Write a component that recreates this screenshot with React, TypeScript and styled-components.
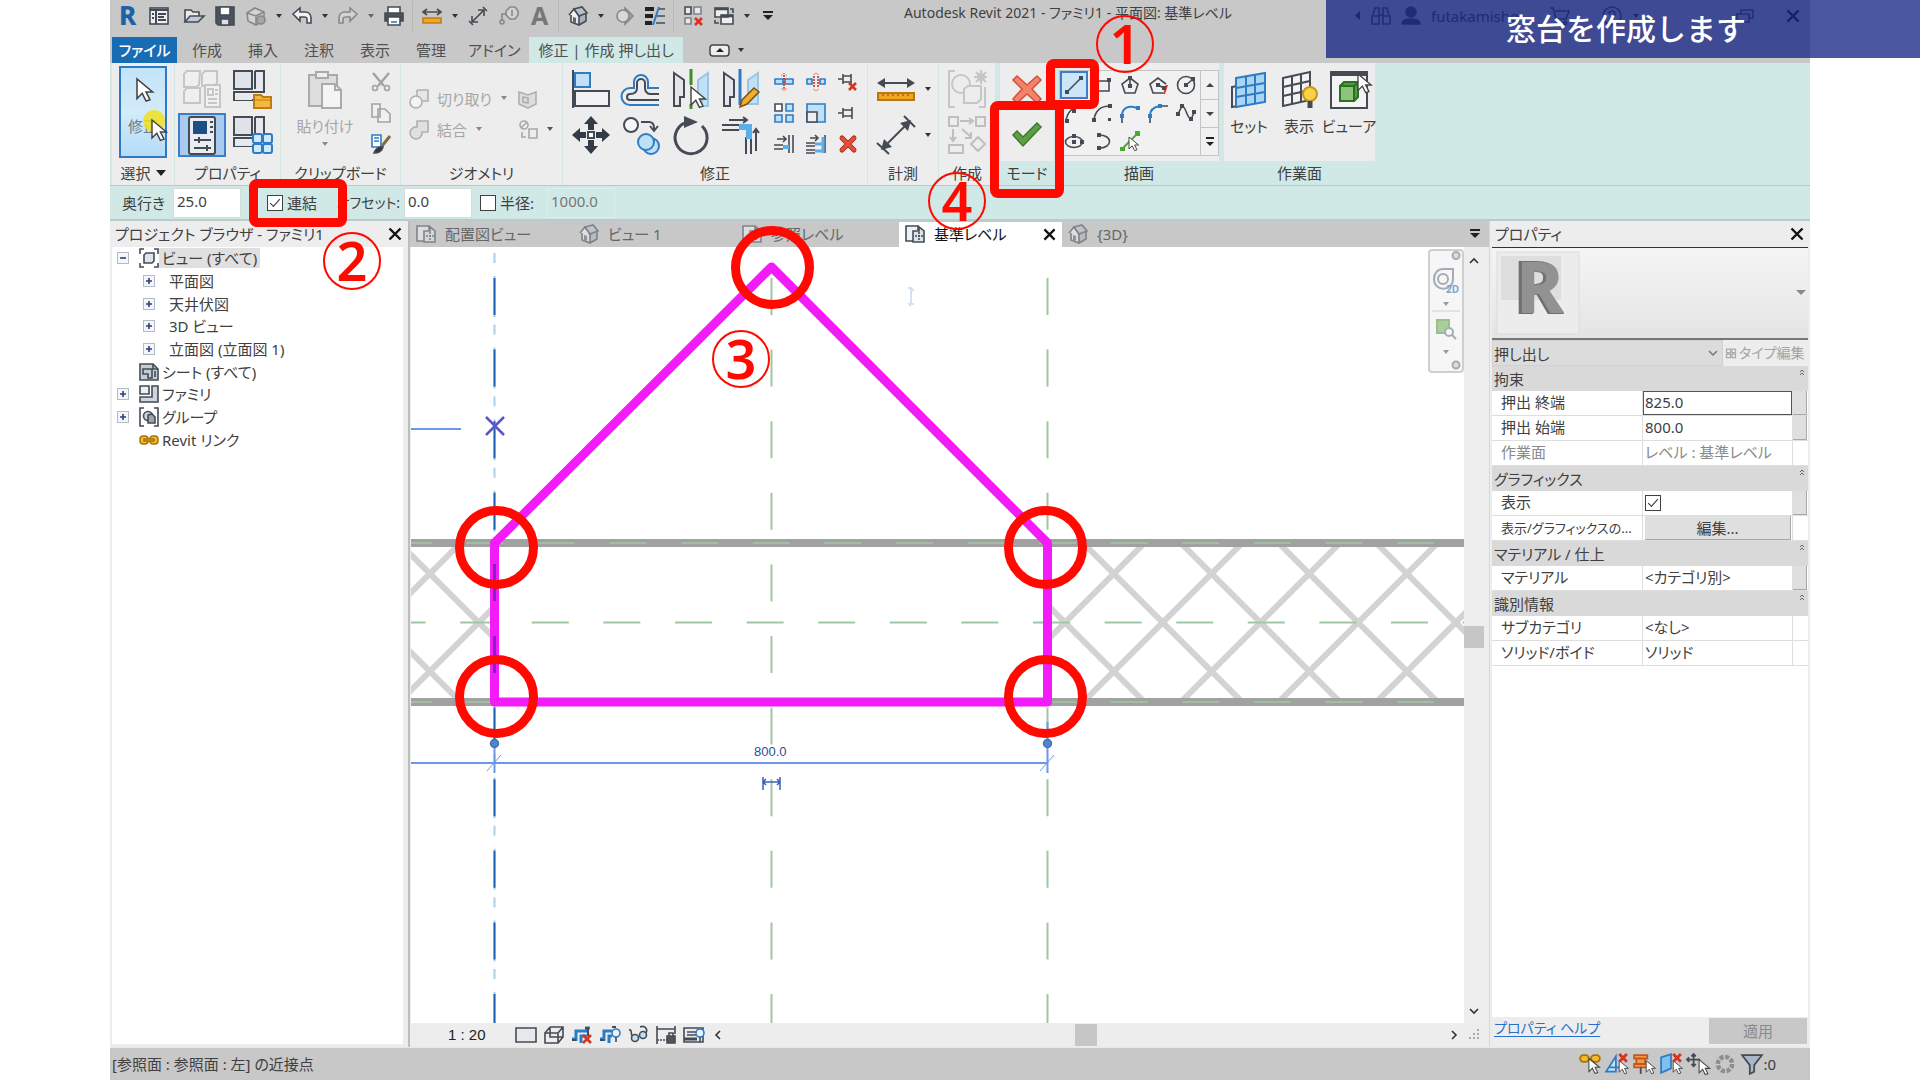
import React from "react";
import styled, { createGlobalStyle, css } from "styled-components";

const GlobalStyle = createGlobalStyle`
  *, *::before, *::after { box-sizing: border-box; }
  body { margin: 0; background: #fff; }
  body, button, input, select, table {
    font-family: "Noto Sans", "Noto Sans CJK JP", sans-serif;
    font-size: 15px;
    line-height: 20px;
    font-feature-settings: "palt";
    color: #404040;
  }
  button { border: 0; background: none; padding: 0; margin: 0; }
  ul { list-style: none; margin: 0; padding: 0; }
  svg { display: block; flex: none; overflow: visible; }
`;

const teal = "#d0e8e6";
const chrome = "#c8c8c8";
const pane = "#ededed";
const red = "#ff0a00";

const Frame = styled.div`
  position: relative;
  height: 100vh;
  margin: 0 110px;
  display: flex;
  flex-direction: column;
  background: ${chrome};
  white-space: nowrap;
`;

/* ---------- quick access bar ---------- */
const TopBar = styled.header`
  display: flex;
  height: 37px;
  flex: none;
  padding-left: 2px;
`;
const QuickAccess = styled.div`
  display: flex;
  align-items: center;
  height: 32px;
`;
const QatButton = styled.button<{ $gap?: boolean; $dim?: boolean }>`
  width: 31px;
  height: 32px;
  margin-left: ${(p) => (p.$gap ? 4 : 0)}px;
  opacity: ${(p) => (p.$dim ? 0.5 : 1)};
  display: grid;
  place-items: center;
`;
const QatArrow = styled.button`
  width: 15px;
  height: 32px;
  display: grid;
  place-items: center;
`;
const QatRule = styled.span`
  width: 1px;
  height: 30px;
  margin: 0 3px;
  background: #b8b8b8;
`;
const QatCustomize = styled.button`
  width: 28px;
  height: 32px;
  display: grid;
  place-items: center;
`;
const AppTitle = styled.h1`
  flex: 1;
  margin: 0;
  padding-top: 3px;
  font-size: 14px;
  font-weight: 400;
  text-align: center;
`;
const Account = styled.div`
  display: flex;
  align-items: center;
  gap: 10px;
  height: 32px;
  width: 456px;
  padding-right: 10px;
`;
const Spacer = styled.span`
  flex: 1;
`;

/* ---------- ribbon tabs ---------- */
const TabRow = styled.nav`
  display: flex;
  height: 26px;
  flex: none;
  padding-left: 2px;
`;
const RibbonTab = styled.button<{ $active?: boolean; $tight?: boolean }>`
  padding: 0 ${(p) => (p.$tight ? 9 : 13)}px;
  color: #505050;
  ${(p) => p.$active && css`background: ${teal};`}
`;
const FileTab = styled.button`
  width: 65px;
  margin-right: 2px;
  background: #176cb4;
  color: #fff;
  font-weight: 500;
`;
const RibbonToggle = styled.button`
  display: flex;
  align-items: center;
  gap: 7px;
  margin-left: 26px;
`;

/* ---------- ribbon ---------- */
const Ribbon = styled.section`
  display: flex;
  flex: none;
  height: 123px;
  padding-left: 2px;
  background: ${teal};
  border-bottom: 1px solid #b9c9c8;
`;
const Panel = styled.div<{ $w: number; $gap?: number }>`
  width: ${(p) => p.$w}px;
  margin-right: ${(p) => p.$gap ?? 0}px;
  display: flex;
  flex-direction: column;
  background: ${pane};
  border-right: 1px solid #d3e6e5;
`;
const PanelBody = styled.div<{ $pad?: string }>`
  display: flex;
  height: 98px;
  padding: ${(p) => p.$pad ?? "3px"};
`;
const PanelTitle = styled.div<{ $tint?: boolean }>`
  display: flex;
  align-items: center;
  justify-content: center;
  gap: 5px;
  height: 24px;
  background: ${(p) => (p.$tint ? teal : "transparent")};
`;
const BigButton = styled.button<{ $on?: boolean; $w?: number; $dim?: boolean }>`
  width: ${(p) => p.$w ?? 50}px;
  height: 92px;
  display: flex;
  flex-direction: column;
  align-items: center;
  padding-top: 4px;
  gap: 6px;
  color: ${(p) => (p.$dim ? "#a6a6a6" : "#404040")};
  ${(p) =>
    p.$on &&
    css`
      border: 2px solid #2f78c8;
      background: linear-gradient(#c2e4f8, #d3ebfa 50%, #b4dcf6);
      padding-top: 8px;
      gap: 8px;
      color: #6b7f8c;
    `}
`;
const IconGrid = styled.div<{ $cols: number; $cw: number; $rh: number; $gap?: string }>`
  display: grid;
  grid-template-columns: repeat(${(p) => p.$cols}, ${(p) => p.$cw}px);
  grid-auto-rows: ${(p) => p.$rh}px;
  gap: ${(p) => p.$gap ?? "0"};
  align-content: start;
`;
const IconButton = styled.button<{ $on?: boolean; $pale?: boolean; $dim?: boolean }>`
  display: flex;
  align-items: center;
  justify-content: center;
  gap: 8px;
  opacity: ${(p) => (p.$dim ? 0.45 : 1)};
  ${(p) => p.$on && css`border: 2px solid #3d7cc9; background: ${p.$pale ? "#cbe6f9" : "#a9cbf0"};`}
`;
const TextButton = styled.button<{ $w: number }>`
  width: ${(p) => p.$w}px;
  height: 31px;
  display: flex;
  align-items: center;
  gap: 8px;
  padding-left: 4px;
  color: #a6a6a6;
`;
const Stack = styled.div`
  display: flex;
  flex-direction: column;
`;
const Line = styled.div`
  display: flex;
`;
const Gallery = styled.div`
  display: flex;
  height: 86px;
  margin-top: 4px;
  border: 1px solid #c4c4c4;
  background: #f1f1f1;
`;
const GalleryScroll = styled.div`
  width: 18px;
  display: grid;
  grid-template-rows: repeat(3, 1fr);
  border-left: 1px solid #c4c4c4;
  button { display: grid; place-items: center; }
  button + button { border-top: 1px solid #c4c4c4; }
`;

/* ---------- options bar ---------- */
const OptionsBar = styled.section`
  display: flex;
  align-items: center;
  flex: none;
  height: 35px;
  padding-left: 12px;
  background: ${teal};
  border-bottom: 2px solid #bccbca;
`;
const OptLabel = styled.label<{ $w?: number; $end?: boolean }>`
  width: ${(p) => (p.$w ? p.$w + "px" : "auto")};
  text-align: ${(p) => (p.$end ? "right" : "left")};
  padding-right: ${(p) => (p.$end ? 4 : 0)}px;
  font-size: ${(p) => (p.$end ? 14 : 15)}px;
`;
const OptInput = styled.input<{ $flat?: boolean }>`
  width: 68px;
  height: 30px;
  padding: 0 3px 3px;
  border: 1px solid ${(p) => (p.$flat ? "#dbeeed" : "#d5dcdc")};
  background: ${(p) => (p.$flat ? "transparent" : "#fff")};
  border-radius: 0;
  color: ${(p) => (p.$flat ? "#777" : "#404040")};
`;
const Check = styled.input<{ $gap?: number }>`
  appearance: none;
  flex: none;
  width: 16px;
  height: 16px;
  margin: 0 4px 0 ${(p) => p.$gap ?? 0}px;
  border: 1px solid #404040;
  background: #fff;
  display: grid;
  place-items: center;
  &:checked::after {
    content: "";
    width: 10px;
    height: 5px;
    margin-top: -3px;
    border-left: 1px solid #333;
    border-bottom: 1px solid #333;
    transform: rotate(-48deg);
  }
`;

/* ---------- workspace ---------- */
const Work = styled.main`
  flex: 1;
  min-height: 0;
  display: grid;
  grid-template-columns: 298px 1fr 320px;
  border-bottom: 1px solid #e8e8e8;
`;
const SidePane = styled.aside`
  display: flex;
  flex-direction: column;
  min-height: 0;
  background: ${pane};
`;
const PaneHeader = styled.div`
  display: flex;
  align-items: center;
  justify-content: space-between;
  height: 26px;
  flex: none;
  padding: 0 6px 0 5px;
`;
const Tree = styled.ul`
  flex: 1;
  margin: 0 5px 3px 2px;
  background: #fff;
`;
const TreeRows = styled.div`
  display: grid;
  grid-template-rows: repeat(9, 1fr);
  height: 204px;
`;
const Node = styled.li<{ $child?: boolean; $sel?: boolean }>`
  display: flex;
  align-items: center;
  padding-left: ${(p) => (p.$child ? 31 : 5)}px;
  span { padding: 0 3px; background: ${(p) => (p.$sel ? "#e0e0e0" : "transparent")}; }
`;
const Toggle = styled.button<{ $wide?: boolean; $none?: boolean }>`
  width: 12px;
  height: 12px;
  margin-right: ${(p) => (p.$wide ? 11 : 10)}px;
  display: grid;
  place-items: center;
  ${(p) => !p.$none && css`border: 1px solid #b5bcc6; background: #f5f6f8;`}
`;

const Docs = styled.section`
  display: flex;
  flex-direction: column;
  min-width: 0;
  min-height: 0;
  background: ${pane};
  border-left: 2px solid #bdbdbd;
  border-right: 1px solid #d8d8d8;
`;
const ViewTabs = styled.div`
  display: flex;
  align-items: center;
  flex: none;
  height: 26px;
  padding-right: 8px;
  background: ${chrome};
`;
const ViewTab = styled.button<{ $active?: boolean }>`
  width: 163px;
  height: 25px;
  display: flex;
  align-items: center;
  gap: 9px;
  padding: 0 6px;
  color: ${(p) => (p.$active ? "#111" : "#666")};
  background: ${(p) => (p.$active ? "#fff" : "transparent")};
  svg:first-child { opacity: ${(p) => (p.$active ? 1 : 0.55)}; }
`;
const CanvasRow = styled.div`
  flex: 1;
  min-height: 0;
  display: flex;
  padding: 0 5px 0 1px;
`;
const Canvas = styled.div`
  position: relative;
  flex: 1;
  min-width: 0;
  background: #fff;
  overflow: hidden;
`;
const NavBar = styled.div`
  position: absolute;
  top: 2px;
  right: 0;
  width: 36px;
  height: 124px;
  border: 2px solid #cfcfcf;
  border-radius: 4px;
  background: #f6f6f6;
`;
const VScroll = styled.div`
  width: 20px;
  display: flex;
  flex-direction: column;
  align-items: center;
  padding: 9px 0 6px;
  background: #eee;
`;
const Thumb = styled.div<{ $h?: boolean }>`
  width: ${(p) => (p.$h ? 22 : 20)}px;
  height: 22px;
  background: #c6c6c6;
`;
const ViewBar = styled.div`
  display: flex;
  align-items: center;
  flex: none;
  height: 24px;
  padding: 0 9px 0 38px;
  color: #222;
`;
const ViewIcons = styled.div`
  display: flex;
  gap: 8px;
  margin-right: 8px;
`;
const ScaleText = styled.span`
  width: 68px;
  font-family: "Liberation Sans", sans-serif;
`;
const ScrollEnd = styled.div`
  display: flex;
  align-items: center;
  gap: 8px;
`;

/* ---------- properties ---------- */
const TypeBox = styled.div`
  display: flex;
  align-items: center;
  justify-content: space-between;
  height: 93px;
  margin: 0 2px;
  padding: 0 2px 0 4px;
  border-top: 1px solid #333;
  border-bottom: 2px solid #777;
  background: linear-gradient(#f5f5f5, #e4e4e4);
`;
const TypeRow = styled.div`
  display: flex;
  height: 26px;
  margin: 0 2px;
`;
const InstanceSelect = styled.div`
  position: relative;
  width: 231px;
  select {
    appearance: none;
    width: 100%;
    height: 26px;
    padding: 1px 1px 0;
    border: 1px solid #d0d0d0;
    border-radius: 0;
    background: #dcdcdc;
  }
  svg { position: absolute; right: 5px; top: 8px; }
`;
const EditType = styled.button`
  flex: 1;
  display: flex;
  align-items: center;
  gap: 3px;
  padding-left: 3px;
  font-size: 14px;
  color: #a3a3a3;
`;
const PropArea = styled.div`
  flex: 1;
  margin: 0 2px;
  background: #fff;
`;
const PropTable = styled.table`
  width: 100%;
  table-layout: fixed;
  border-collapse: separate;
  border-spacing: 0;
  th, td {
    height: 25px;
    padding: 0 0 2px 2px;
    text-align: left;
    font-weight: 400;
    border-bottom: 1px solid #dedede;
    line-height: 20px;
  }
  tr > th[scope="row"] { padding-left: 9px; border-right: 1px solid #dedede; }
  th[colspan] { padding: 1px 0 0 2px; background: #d9d9d9; border-bottom-color: #d9d9d9; }
  td:last-child { padding: 0; border-left: 1px solid #dedede; }
  td:has(input[type="checkbox"]), td:has(> button), td:has(> input) { padding-bottom: 0; }
`;
const PropInput = styled.input<{ $focus?: boolean }>`
  display: block;
  width: 149px;
  height: 24px;
  padding: 0 1px 2px;
  margin-left: -2px;
  border: 1px solid ${(p) => (p.$focus ? "#555" : "transparent")};
  background: transparent;
`;
const EditCell = styled.button`
  display: block;
  width: 146px;
  height: 24px;
  background: #dfdfdf;
  border-right: 1px solid #a8a8a8;
  border-bottom: 1px solid #a8a8a8;
`;
const MiniCell = styled.button`
  display: block;
  width: 14px;
  height: 24px;
  background: #dfdfdf;
  border-right: 1px solid #a8a8a8;
  border-bottom: 1px solid #a8a8a8;
`;
const SectionHead = styled.div`
  display: flex;
  justify-content: space-between;
  padding-right: 4px;
`;
const PropFooter = styled.div`
  display: flex;
  align-items: flex-start;
  justify-content: space-between;
  height: 30px;
  padding: 1px 3px 0 4px;
  a { color: #2a6fc9; text-underline-offset: 3px; font-size: 14px; }
`;
const Apply = styled.button`
  width: 98px;
  height: 26px;
  background: ${chrome};
  color: #8a8a8a;
`;
const DimText = styled.span<{ $dim?: boolean; $long?: boolean }>`
  color: ${(p) => (p.$dim ? "#8a8a8a" : "#404040")};
  font-size: ${(p) => (p.$long ? 13 : 15)}px;
`;

/* ---------- status bar ---------- */
const Status = styled.footer`
  display: flex;
  align-items: center;
  flex: none;
  height: 32px;
  padding: 0 34px 0 2px;
`;
const StatusIcons = styled.div`
  display: flex;
  align-items: center;
  margin-left: auto;
  gap: 5px;
`;
const FilterButton = styled.button`
  display: flex;
  align-items: center;
`;

/* ---------- overlays ---------- */
const Banner = styled.div`
  position: absolute;
  top: 0;
  left: 1216px;
  right: -110px;
  height: 58px;
  padding: 5px 0 0 180px;
  background: rgba(21, 36, 131, 0.77);
  color: #fff;
  font: 500 30px/44px "Noto Sans CJK JP", sans-serif;
  font-feature-settings: normal;
`;
type Spot = { $x: number; $y: number };
const Ring = styled.div<Spot>`
  position: absolute;
  left: ${(p) => p.$x}px;
  top: ${(p) => p.$y}px;
  width: 83px;
  height: 83px;
  border: 9px solid ${red};
  border-radius: 50%;
`;
const Mark = styled.div<Spot & { $w: number; $h: number }>`
  position: absolute;
  left: ${(p) => p.$x}px;
  top: ${(p) => p.$y}px;
  width: ${(p) => p.$w}px;
  height: ${(p) => p.$h}px;
  border: 9px solid ${red};
  border-radius: 8px;
`;
const StepNo = styled.div<Spot>`
  position: absolute;
  left: ${(p) => p.$x}px;
  top: ${(p) => p.$y}px;
  width: 58px;
  height: 58px;
  border: 2px solid ${red};
  border-radius: 50%;
  color: ${red};
  font: 600 54px/53px "Noto Sans", sans-serif;
  text-align: center;
`;
const Pointer = styled.div<Spot>`
  position: absolute;
  left: ${(p) => p.$x}px;
  top: ${(p) => p.$y}px;
`;

/* ---------- icons ---------- */
const K = "#444b54";
const B = "#2f7cc4";
const L = "#bfe0f6";

type IcoProps = { s?: number; v?: number; children: React.ReactNode };
const Ico = ({ s = 20, v = 20, children }: IcoProps) => (
  <svg width={s} height={s} viewBox={`0 0 ${v} ${v}`} fill="none" stroke={K} strokeWidth={v > 20 ? 2 : 1.6} aria-hidden="true">
    {children}
  </svg>
);
const Big = ({ children }: { children: React.ReactNode }) => <Ico s={40} v={40}>{children}</Ico>;
const Down = ({ c = "#333" }: { c?: string }) => (
  <svg width="8" height="5" viewBox="0 0 8 5" aria-hidden="true"><path d="M1 0h6L4 4z" fill={c} /></svg>
);
const BarDown = () => (
  <svg width="12" height="10" viewBox="0 0 12 10" aria-hidden="true"><path d="M1 1h10" stroke="#222" strokeWidth="2" /><path d="M1 4h10L6 9z" fill="#222" /></svg>
);
const Cross = ({ s = 14 }: { s?: number }) => (
  <svg width={s} height={s} viewBox="0 0 14 14" stroke="#111" strokeWidth="2.4" aria-hidden="true"><path d="M1.500 1.500l11 11M12.500 1.500l-11 11" /></svg>
);
const RedX = ({ x, y, w = 8 }: { x: number; y: number; w?: number }) => (
  <path d={`M${x} ${y}l${w} ${w}M${x + w} ${y}l${-w} ${w}`} stroke="#d8331f" strokeWidth="2.6" />
);
const Arrow = ({ x, y, k = 1 }: { x: number; y: number; k?: number }) => (
  <path d="M0 0v15l4-4 3 6 3-1-3-6h5z" transform={`translate(${x} ${y}) scale(${k})`} fill="#fff" stroke="#444" strokeWidth="1.200" />
);
const Chevron = ({ d }: { d: "up" | "down" | "left" | "right" }) => {
  const p = { up: "M2 7l4-4 4 4", down: "M2 4l4 4 4-4", left: "M8 2L4 6l4 4", right: "M4 2l4 4-4 4" }[d];
  return <svg width="12" height="12" viewBox="0 0 12 12" fill="none" stroke="#333" strokeWidth="1.600" aria-hidden="true"><path d={p} /></svg>;
};
const HouseIcon = () => (
  <Ico>
    <path d="M3 8v8l8 3 7-4V7l-7-1z" fill="#e6e9ee" stroke="none" />
    <path d="M11 10v9l7-4V7z" fill="#aab2be" stroke="none" />
    <path d="M1 9l5-6 5 7-1 0" fill="#f4f5f7" />
    <path d="M6 3l8-2 5 6-8 3z" fill="#b7bfca" />
    <path d="M3 9v7l8 3 7-4V8M11 10v9" />
    <path d="M5 11l3 1v5l-3-1z" fill="#666" stroke="none" />
  </Ico>
);
const PlanIcon = () => (
  <Ico>
    <path d="M8 17H1V2h12v4" fill="#eef1f4" />
    <path d="M8 7h6V3l5 4v11H8z" fill="#dde3ea" />
    <path d="M10 12h8M14 8v8" strokeDasharray="2 1" />
  </Ico>
);
const CubesIcon = () => (
  <Big>
    <g stroke="#999"><path d="M2 5l3-3h13l-1 14-3 2H2zM20 5l3-3h12v12l-3 3H20z" fill="#f2f2f2" /><path d="M2 22l3-3h13v15H2z" fill="#f2f2f2" /><rect x="23" y="16" width="15" height="22" fill="#f6f6f6" /><path d="M26 20h5v6h-5zM33 21h3M33 25h3M26 30h9M26 34h9" /></g>
  </Big>
);
const FamilyTypes = ({ kind }: { kind: "folder" | "grid" }) => (
  <Big>
    <path d="M1 2h18v18H1z" fill="#dfe2e8" />
    <path d="M22 2h9v21H1v8h19" fill="none" />
    <path d="M23 3h7v17h-7zM2 25h17v6H2z" fill="#e6e8ed" stroke="none" />
    <path d="M22 2v18" />
    {kind === "folder" ? (
      <g><path d="M21 26h7l2 2h8v11H21z" fill="#f6b73c" stroke="#b97d12" /><path d="M21 31h17" stroke="#b97d12" strokeWidth="1" /></g>
    ) : (
      <g fill="#cdeafc" stroke={B}><rect x="20" y="19" width="9" height="9" rx="2" /><rect x="30" y="19" width="9" height="9" rx="2" /><rect x="20" y="29" width="9" height="9" rx="2" /><rect x="30" y="29" width="9" height="9" rx="2" /></g>
    )}
  </Big>
);

const Drawing = () => {
  const hatch = [-7, -6, -5, -1, 0, 1, 2, 3, 4, 5].map((k) => 1065 + 97.7 * k);
  const dashes = "37 34.6";
  return (
    <svg width="100%" height="100%" viewBox="411 247 1053 776" preserveAspectRatio="xMinYMin slice" fill="none">
      <defs>
        <clipPath id="walls"><path d="M411 547h80v152h-80zM1051 547h413v152h-413z" /></clipPath>
      </defs>
      <g clipPath="url(#walls)" stroke="#d3d3d3" strokeWidth="6">
        {hatch.map((x) => <path key={x} d={`M${x - 90} 532.500l180 180M${x - 90} 712.500l180 -180`} />)}
      </g>
      <path d="M411 543h1053M411 702h1053" stroke="#a1a1a1" strokeWidth="8" />
      <g stroke="#9fc7a2" strokeWidth="2">
        <path d="M394.700 543H1450M394.700 702H1450" strokeDasharray={dashes} strokeWidth="1.500" />
        <path d="M388.600 622.500H1464" strokeDasharray={dashes} />
        <path d="M771.500 278V1023M1047.500 278V1023" strokeDasharray={dashes} />
      </g>
      <path d="M494.500 253V1023" stroke="#a9d2ea" strokeWidth="2" strokeDasharray="10 13 41 7.6" />
      <path d="M494.500 278V1023" stroke="#1c62b4" strokeWidth="2" strokeDasharray={dashes} />
      <path d="M494.500 543L771.500 267L1047.500 543V702H494.500z" stroke="#f31bf7" strokeWidth="9" strokeLinejoin="round" />
      <path d="M494.500 564v37M494.500 636v37" stroke="#8a1fc4" strokeWidth="3" />
      <g stroke="#6b97e8" strokeWidth="2">
        <path d="M411 763h637M494.500 743v30M1047.500 722v51M411 429h50" />
        <path d="M487 771l14-16M1040 771l14-16" strokeWidth="1" />
      </g>
      <g fill="#4a86d8" stroke="#4e6f9e" strokeWidth="1.500"><circle cx="494.500" cy="743.500" r="4" /><circle cx="1047.500" cy="743.500" r="4" /></g>
      <text x="754" y="756" fill="#2d4da0" fontFamily="Liberation Sans, sans-serif" fontSize="13">800.0</text>
      <path d="M763 777v13M780 777v13M763 782h17M766 779l-3 3 3 3M777 779l3 3-3 3" stroke="#3b62b5" strokeWidth="1.500" />
      <path d="M486 417l18 18M504 417l-18 18" stroke="#5d55c2" strokeWidth="2.500" />
      <path d="M908 288h3v16M914 304h-3M908 303l3 3M911 288l3 3" stroke="#cdd5f2" strokeWidth="1.500" />
    </svg>
  );
};

const nodes: { t: string; child?: boolean; sel?: boolean; sign?: string; icon?: React.ReactNode }[] = [
  { t: "ビュー (すべて)", sel: true, sign: "-", icon: <Ico><path d="M1 6V1h4M15 1h4v5M19 15v4h-4M5 19H1v-4" /><path d="M5 7l2-2h8v8l-2 2H5z" fill="#dfe4ec" /></Ico> },
  { t: "平面図", child: true, sign: "+" },
  { t: "天井伏図", child: true, sign: "+" },
  { t: "3D ビュー", child: true, sign: "+" },
  { t: "立面図 (立面図 1)", child: true, sign: "+" },
  { t: "シート (すべて)", icon: <Ico><path d="M1 2h13l5 5v11H1z" fill="#c4ccd8" /><path d="M4 7h9v9H9v-4H4zM16 9v6M14 2v5h5" /></Ico> },
  { t: "ファミリ", sign: "+", icon: <Ico><path d="M1 2h9v8H1z" fill="#eef0f3" /><path d="M13 2h6v16H1v-5h12z" fill="#cfd5de" /></Ico> },
  { t: "グループ", sign: "+", icon: <Ico><path d="M5 1H1v18h4M15 1h4v18h-4" /><circle cx="9" cy="9" r="4.500" fill="#cfd6df" /><path d="M9 8l4-1 3 3v6H9z" fill="#9aa4b2" /></Ico> },
  { t: "Revit リンク", icon: <Ico><g stroke="#a87408" strokeWidth="1.500" fill="#f5b92e"><rect x="1" y="6" width="8" height="8" rx="3" /><rect x="11" y="6" width="8" height="8" rx="3" /><path d="M5 9h10v2H5z" /></g></Ico> },
];

type Row = { head?: string; name?: string; id?: string; value?: React.ReactNode; btn?: boolean; dim?: boolean; long?: boolean };
const rows: Row[] = [
  { head: "拘束" },
  { name: "押出 終端", id: "p-end", value: <PropInput id="p-end" $focus defaultValue="825.0" />, btn: true },
  { name: "押出 始端", id: "p-start", value: <PropInput id="p-start" defaultValue="800.0" />, btn: true },
  { name: "作業面", value: "レベル : 基準レベル", dim: true },
  { head: "グラフィックス" },
  { name: "表示", id: "p-show", value: <Check id="p-show" type="checkbox" defaultChecked />, btn: true },
  { name: "表示/グラフィックスの...", value: <EditCell>編集...</EditCell>, long: true },
  { head: "マテリアル / 仕上" },
  { name: "マテリアル", value: "<カテゴリ別>", btn: true },
  { head: "識別情報" },
  { name: "サブカテゴリ", value: "<なし>" },
  { name: "ソリッド/ボイド", value: "ソリッド" },
];

const TopArea = () => (
  <TopBar>
    <QuickAccess>
      <QatButton aria-label="Revit">
        <svg width="24" height="32" viewBox="0 0 24 32"><text x="3" y="25" fontFamily="Noto Sans, sans-serif" fontWeight="800" fontSize="26" fill="#1b62a8">R</text></svg>
      </QatButton>
      <QatButton aria-label="ホーム"><Ico><rect x="1" y="2" width="18" height="16" fill="#eee" /><path d="M1 4h18M7 5v13M9 8h8M9 11h6M9 14h8M3 8h2M3 12h2" strokeWidth="2" /></Ico></QatButton>
      <QatButton $gap aria-label="開く"><Ico><path d="M1 16V4h6l2 2h6v4" fill="#e8eaee" /><path d="M1 16l5-6h14l-6 6z" fill="#c2cad6" /></Ico></QatButton>
      <QatButton aria-label="保存"><Ico><path d="M1 1h18v18H3l-2-2z" fill="#4a535f" /><path d="M5 1h10v8H5z" fill="#fff" /><path d="M6 13h8v6H6z" fill="#dde" /></Ico></QatButton>
      <QatButton $dim aria-label="同期"><Ico><path d="M1 7l8-5 9 4v8l-8 5-8-4z" fill="#ddd" /><path d="M1 7l9 3 8-4M10 10v9" /><circle cx="15" cy="14" r="4" fill="#888" /></Ico></QatButton>
      <QatArrow aria-label="同期メニュー"><Down /></QatArrow>
      <QatButton aria-label="元に戻す"><Ico><path d="M1 8l7-6v4h5c4 0 6 3 6 6v5h-4v-4c0-2-1-2-3-2H8v4z" fill="#f2f4f7" /></Ico></QatButton>
      <QatArrow aria-label="元に戻すメニュー"><Down /></QatArrow>
      <QatButton $dim aria-label="やり直し"><Ico><path d="M19 8l-7-6v4H7c-4 0-6 3-6 6v5h4v-4c0-2 1-2 3-2h4v4z" fill="#ddd" /></Ico></QatButton>
      <QatArrow aria-label="やり直しメニュー"><Down c="#666" /></QatArrow>
      <QatButton aria-label="印刷"><Ico><path d="M4 7V1h12v6" fill="#fff" /><path d="M1 7h18v8H1z" fill="#4a535f" /><path d="M4 11h12v8H4z" fill="#fff" /><path d="M7 16h6" stroke={B} /></Ico></QatButton>
      <QatRule />
      <QatButton aria-label="計測"><Ico><path d="M1 6h18M5 3L1 6l4 3M15 3l4 3-4 3" /><path d="M1 12h18v5H1z" fill="#f5a623" stroke="#c47f10" /></Ico></QatButton>
      <QatArrow aria-label="計測メニュー"><Down /></QatArrow>
      <QatButton aria-label="寸法"><Ico><path d="M4 16L16 4M10 4h6v6M4 10v6h6" /><path d="M1 15l4 4M15 1l4 4" /></Ico></QatButton>
      <QatButton $dim aria-label="タグ"><Ico><path d="M7 5l4-4h5l3 4v4l-3 4h-5L7 9z" fill="#ddd" /><path d="M13 4v6M8 8H3v7" /><circle cx="3" cy="16" r="2" /></Ico></QatButton>
      <QatButton aria-label="文字">
        <svg width="24" height="32" viewBox="0 0 24 32"><text x="3" y="25" fontFamily="Noto Sans, sans-serif" fontWeight="700" fontSize="25" fill="#777">A</text></svg>
      </QatButton>
      <QatRule />
      <QatButton aria-label="3D ビュー"><HouseIcon /></QatButton>
      <QatArrow aria-label="3D ビューメニュー"><Down /></QatArrow>
      <QatButton $dim aria-label="断面"><Ico><path d="M11 2l8 8-8 8z" fill="#888" /><circle cx="9" cy="10" r="6" fill="#e8e8e8" /></Ico></QatButton>
      <QatButton aria-label="細線"><Ico><path d="M0 3h9M0 10h8M0 17h7" stroke="#222" strokeWidth="4" /><path d="M14 3h6M12 10h8M11 17h9" strokeWidth="1.500" /><path d="M8 19l6-18" stroke={B} strokeWidth="2" /></Ico></QatButton>
      <QatRule />
      <QatButton aria-label="非表示を閉じる"><Ico><g stroke="#7b828c"><path d="M11 1h7v7h-7zM2 12h6v6H2z" fill="#e8e8e8" /></g><path d="M2 1h6v7H2z" fill="#e8e8e8" /><RedX x={12} y={12} w={7} /></Ico></QatButton>
      <QatButton aria-label="ウィンドウ切替"><Ico><path d="M1 2h13v9H1zM7 9h12v9H7z" fill="#eee" /><path d="M1 3h13M7 10h12" strokeWidth="2.500" /><path d="M16 3h3v4M1 14v3h4" /></Ico></QatButton>
      <QatArrow aria-label="ウィンドウメニュー"><Down /></QatArrow>
      <QatCustomize aria-label="カスタマイズ"><BarDown /></QatCustomize>
    </QuickAccess>
    <AppTitle>Autodesk Revit 2021 - ファミリ1 - 平面図: 基準レベル</AppTitle>
    <Account>
      <svg width="7" height="10" viewBox="0 0 7 10"><path d="M6 0v9L1 4.500z" fill="#333" /></svg>
      <Ico><path d="M2 9l2-7h4v8M18 9l-2-7h-4v8M1 10h7v8H1zM12 10h7v8h-7zM8 9h4" /></Ico>
      <Ico><circle cx="10" cy="6" r="5" fill={K} /><path d="M1 18c1-5 5-5 9-5s8 0 9 5z" fill={K} /></Ico>
      <span>futakamisho</span>
      <Spacer />
      <Ico><path d="M0 2h3l3 11h10l3-8H5" /><circle cx="8" cy="17" r="1.500" /><circle cx="15" cy="17" r="1.500" /></Ico>
      <Spacer />
      <Ico><circle cx="10" cy="10" r="9" /><path d="M7 8c0-4 6-4 6 0 0 2-3 2-3 5M10 15v2" /></Ico>
      <Down />
      <Spacer /><Spacer /><Spacer /><Spacer />
      <Ico><path d="M2 8h12v8H2zM6 8V4h12v8h-4" /></Ico>
      <Spacer />
      <Cross />
    </Account>
  </TopBar>
);

const RibbonArea = () => (
  <Ribbon>
    <Panel $w={63}>
      <PanelBody $pad="3px 7px">
        <BigButton $w={48} $on><svg width="24" height="32" viewBox="0 0 24 32"><Arrow x={6} y={3} k={1.3} /></svg>修正</BigButton>
      </PanelBody>
      <PanelTitle>選択<svg width="10" height="6" viewBox="0 0 10 6"><path d="M0 0h10L5 6z" fill="#222" /></svg></PanelTitle>
    </Panel>
    <Panel $w={106}>
      <PanelBody $pad="4px 3px">
        <IconGrid $cols={2} $cw={48} $rh={44} $gap="2px 3px">
          <IconButton $dim aria-label="タイプ"><CubesIcon /></IconButton>
          <IconButton aria-label="ファミリカテゴリ"><FamilyTypes kind="folder" /></IconButton>
          <IconButton $on aria-label="プロパティ"><Big><rect x="7" y="2" width="26" height="37" rx="2" fill="#e9edf3" /><path d="M11 6h14v13H11z" fill="#1f4e86" stroke="none" /><path d="M28 7h3M28 12h3M28 17h3" /><path d="M12 25h17M12 33h17M17 22v6M25 30v6" /></Big></IconButton>
          <IconButton aria-label="ファミリタイプ"><FamilyTypes kind="grid" /></IconButton>
        </IconGrid>
      </PanelBody>
      <PanelTitle>プロパティ</PanelTitle>
    </Panel>
    <Panel $w={120}>
      <PanelBody $pad="3px 4px 0 12px">
        <BigButton $w={64} $dim>
          <Big><g stroke="#aaa"><path d="M4 5h28v31H4z" fill="#ddd" /><path d="M11 2h12v6H11z" fill="#eee" /><path d="M17 14h13l6 6v18H17z" fill="#f4f4f4" /><path d="M30 14v6h6" /></g></Big>
          貼り付け
          <Down c="#888" />
        </BigButton>
        <Spacer />
        <IconGrid $cols={1} $cw={30} $rh={31}>
          <IconButton $dim aria-label="切り取り"><Ico><path d="M2 1l11 13M18 1L7 14" strokeWidth="2.500" /><circle cx="4" cy="16" r="2.500" /><circle cx="16" cy="16" r="2.500" /></Ico></IconButton>
          <IconButton $dim aria-label="コピー"><Ico><path d="M1 1h8v13H1zM7 6h7l5 5v8H7z" fill="#f4f4f4" /></Ico></IconButton>
          <IconButton aria-label="書式コピー"><Ico><path d="M1 1h9v12H1z" fill="#fff" stroke={B} /><path d="M3 4h5M3 7h5" stroke={B} /><path d="M19 2l-8 10" strokeWidth="3" stroke="#8a6a40" /><path d="M3 19c2-5 5-7 9-6-1 4-4 6-9 6z" fill="#333" /></Ico></IconButton>
        </IconGrid>
      </PanelBody>
      <PanelTitle>クリップボード</PanelTitle>
    </Panel>
    <Panel $w={162}>
      <PanelBody $pad="20px 4px">
        <Stack>
          <Line>
            <TextButton $w={109}><Ico><g stroke="#b0b0b0"><path d="M8 1h11v11h-6M8 1v6" fill="#e6e6e6" /><circle cx="7" cy="13" r="6" fill="#f4f4f4" /></g></Ico>切り取り<Down c="#888" /></TextButton>
            <TextButton $w={42} aria-label="コープ"><Ico><g stroke="#b0b0b0"><path d="M1 3l9 3 8-3v12l-8 4-9-4z" fill="#ddd" /><path d="M5 8l5 1v5l-5-1z" /></g></Ico></TextButton>
          </Line>
          <Line>
            <TextButton $w={109}><Ico><path d="M8 1h11v11h-6a6 6 0 1 1-5-5z" fill="#e0e0e0" stroke="#b0b0b0" /></Ico>結合<Down c="#888" /></TextButton>
            <TextButton $w={46} aria-label="面を分割"><Ico><g stroke="#a8a8a8"><circle cx="6" cy="5" r="4" /><path d="M3 8l6-6M4 12v5h4M11 9h8v9h-8z" /></g></Ico><Down c="#555" /></TextButton>
          </Line>
        </Stack>
      </PanelBody>
      <PanelTitle>ジオメトリ</PanelTitle>
    </Panel>
    <Panel $w={305}>
      <PanelBody $pad="3px">
        <IconGrid $cols={4} $cw={50} $rh={46}>
          <IconButton aria-label="位置合わせ"><Big><path d="M2 1v38" /><path d="M4 4h15v14H4z" fill={L} stroke={B} /><path d="M4 22h34v15H4z" fill="#f2f2f4" /></Big></IconButton>
          <IconButton aria-label="オフセット"><Big><path d="M38 19H27v-6a7 7 0 0 0-14 0v6H9a8 8 0 0 0 0 17h29" stroke={B} /><path d="M38 25h-9c-3 0-5-3-5-6v-5a4 4 0 0 0-8 0v5c0 4-2 6-7 6a3 3 0 0 0 0 6h29" /></Big></IconButton>
          <IconButton aria-label="鏡像化 - 軸を選択"><Big><path d="M3 4l10 7v17H9v9H3z" fill="#e3e6ea" /><path d="M37 4l-10 7v17h4v9h6z" fill={L} stroke="#9dc4e0" /><path d="M20 0v40" stroke="#3b8f2c" strokeWidth="3" strokeDasharray="16 19" /><Arrow x={20} y={18} k={1.2} /></Big></IconButton>
          <IconButton aria-label="鏡像化 - 軸を描画"><Big><path d="M3 4l10 7v17H9v9H3z" fill="#e3e6ea" /><path d="M37 4l-10 7v24h10z" fill={L} stroke="#9dc4e0" /><path d="M19 0v36" stroke={B} strokeWidth="3" /><path d="M19 38l2-7 12-12 5 4-12 12z" fill="#f2ad2e" stroke="#7a5310" strokeWidth="1.500" /></Big></IconButton>
          <IconButton aria-label="移動"><Big><g fill="#333b45" stroke="none"><path d="M20 1l7 8h-4v6h-6V9h-4zM20 39l7-8h-4v-6h-6v6h-4zM1 20l8-7v4h6v6H9v4zM39 20l-8-7v4h-6v6h6v4z" /></g><path d="M17 17h6v6h-6z" fill="#fff" /></Big></IconButton>
          <IconButton aria-label="複写"><Big><circle cx="10" cy="10" r="7" fill="#f5f5f5" /><path d="M20 7h8q5 0 5 6v2M29 11l4 5 4-5" /><circle cx="30" cy="31" r="8" fill={L} stroke={B} /><circle cx="25" cy="27" r="8" fill={L} stroke={B} /></Big></IconButton>
          <IconButton aria-label="回転"><Big><path d="M17 7A16 16 0 1 0 31 11" strokeWidth="3" /><path d="M13 1l14 6-14 6z" fill={K} stroke="none" /></Big></IconButton>
          <IconButton aria-label="コーナーへトリム"><Big><path d="M8 5h18M22 2l4 3-4 3M1 10h17M1 15h17M25 22v17M30 22v17M35 36V14M32 18l3-4 3 4" /><path d="M18 12h10v12" stroke="#5aaeea" strokeWidth="6" /></Big></IconButton>
        </IconGrid>
        <Spacer />
        <IconGrid $cols={3} $cw={32} $rh={31}>
          <IconButton aria-label="要素を分割"><Ico><path d="M1 7h8v5H1zM11 7h8v5h-8z" fill={L} stroke={B} /><path d="M10 3v14" stroke="#d8331f" strokeDasharray="2 1" /><path d="M7 4l3-3 3 3M7 16l3 3 3-3" stroke="#e58a7c" strokeWidth="1" /></Ico></IconButton>
          <IconButton aria-label="隙間で分割"><Ico><path d="M1 7h5v5H1zM14 7h5v5h-5z" fill={L} stroke={B} /><path d="M8 4v12M12 4v12" stroke="#d8331f" strokeDasharray="2 1" /><path d="M7 3l3-2 3 2M7 17l3 2 3-2" stroke="#e58a7c" strokeWidth="1" /></Ico></IconButton>
          <IconButton aria-label="ピンを解除"><Ico><path d="M0 7h5M5 2v10M5 4h8M5 10h8M13 2v10" /><RedX x={11} y={11} w={7} /></Ico></IconButton>
          <IconButton aria-label="配列"><Ico><path d="M1 1h7v7H1z" fill="#fff" /><path d="M12 1h7v7h-7zM1 12h7v7H1zM12 12h7v7h-7z" fill={L} stroke={B} /></Ico></IconButton>
          <IconButton aria-label="尺度"><Ico><path d="M1 1h18v18H1z" fill={L} stroke={B} /><path d="M1 9h10v10H1z" fill="#eee" /></Ico></IconButton>
          <IconButton aria-label="ピン"><Ico><path d="M0 10h5M5 5v10M5 7l9 0M5 13h9M14 4v12" /></Ico></IconButton>
          <IconButton aria-label="単一要素をトリム"><Ico><path d="M3 5h9M9 2l3 3-3 3M0 11h9M0 15h9M15 1v18M19 1v18" /><path d="M9 13h6" stroke="#5aaeea" strokeWidth="4" /></Ico></IconButton>
          <IconButton aria-label="複数要素をトリム"><Ico><path d="M4 4h8M9 1l3 3-3 3M0 9h9M0 12h9M0 16h9M0 19h9M19 1v18" /><path d="M9 10h7M9 17h7M17 3v16" stroke="#5aaeea" strokeWidth="3" /></Ico></IconButton>
          <IconButton aria-label="削除"><Ico><path d="M4 4l12 12M16 4L4 16" stroke="#b32a18" strokeWidth="5" strokeLinecap="round" /><path d="M4 4l12 12M16 4L4 16" stroke="#e8503a" strokeWidth="3" strokeLinecap="round" /></Ico></IconButton>
        </IconGrid>
      </PanelBody>
      <PanelTitle>修正</PanelTitle>
    </Panel>
    <Panel $w={71}>
      <PanelBody $pad="3px 3px 3px 8px">
        <IconGrid $cols={1} $cw={56} $rh={46}>
          <IconButton aria-label="2点間を計測"><Big><path d="M3 14h34" /><path d="M1 14l8-5v10zM39 14l-8-5v10z" fill={K} stroke="none" /><path d="M2 24h36v7H2z" fill="#f2a521" stroke="#b87a10" /><path d="M7 24v3M12 24v3M17 24v3M22 24v3M27 24v3M32 24v3" stroke="#b87a10" /></Big><Down /></IconButton>
          <IconButton aria-label="平行寸法"><Big><path d="M8 32L32 8" /><path d="M35 5l-3 11-8-8zM5 35l3-11 8 8z" fill={K} stroke="none" /><path d="M1 28l12 11M28 1l11 11" /></Big><Down /></IconButton>
        </IconGrid>
      </PanelBody>
      <PanelTitle>計測</PanelTitle>
    </Panel>
    <Panel $w={57} $gap={4}>
      <PanelBody $pad="3px 3px 3px 6px">
        <IconGrid $cols={1} $cw={44} $rh={46}>
          <IconButton $dim aria-label="グループを作成"><Big><g stroke="#999"><path d="M8 2H2v36h6M32 38h6V18" /><circle cx="14" cy="15" r="9" fill="#eee" /><path d="M17 20l4-3h13v13l-4 4H17z" fill="#eee" /><circle cx="34" cy="8" r="3" fill="#bbb" /><path d="M34 1v14M27 8h13M29 3l10 10M39 3L29 13" /></g></Big></IconButton>
          <IconButton $dim aria-label="類似オブジェクト"><Big><g stroke="#888"><path d="M2 2h9v9H2zM29 2h9v9h-9zM2 30h14v8H2zM31 22l7 7-7 7-7-7zM13 6h13M22 3l4 3-4 3M6 14v12M3 22l3 4 3-4M15 14l9 8M18 23h6v-6" /></g></Big></IconButton>
        </IconGrid>
      </PanelBody>
      <PanelTitle>作成</PanelTitle>
    </Panel>
    <Panel $w={55} $gap={4}>
      <PanelBody $pad="3px 0">
        <IconGrid $cols={1} $cw={54} $rh={46}>
          <IconButton aria-label="キャンセル"><svg width="30" height="30" viewBox="0 0 30 30"><path d="M5 2l10 9L25 2l4 4-9 9 9 10-4 4-10-9-10 9-4-4 9-10-9-9z" fill="#f4836b" stroke="#d94f38" strokeWidth="1.500" /></svg></IconButton>
          <IconButton aria-label="編集モードを終了"><svg width="30" height="26" viewBox="0 0 30 26"><path d="M1 13l4-4 6 6L25 1l4 4-18 19z" fill="#5f9e45" stroke="#3f7a2c" strokeWidth="1.500" /></svg></IconButton>
        </IconGrid>
      </PanelBody>
      <PanelTitle $tint>モード</PanelTitle>
    </Panel>
    <Panel $w={161} $gap={4}>
      <PanelBody $pad="3px 0">
        <Gallery>
          <IconGrid $cols={5} $cw={28} $rh={28}>
            <IconButton $on $pale aria-label="線"><Ico><path d="M3 17L17 3" /><path d="M1 15h4v4H1zM15 1h4v4h-4z" fill={K} stroke="none" /></Ico></IconButton>
            <IconButton aria-label="長方形"><Ico><path d="M2 6h15v10H2z" /><path d="M15 3h4v4h-4z" fill={K} stroke="none" /></Ico></IconButton>
            <IconButton aria-label="内接ポリゴン"><Ico><path d="M10 3l8 6-3 9H5L2 9zM10 3v8" /><path d="M8 9h4v4H8zM8 1h4v4H8z" fill={K} stroke="none" /></Ico></IconButton>
            <IconButton aria-label="外接ポリゴン"><Ico><path d="M15 18H5L2 9l8-6 8 6M10 10l6 3" /><path d="M19 10l-3 9" stroke="#d8331f" strokeWidth="2" /><path d="M8 8h4v4H8zM14 11h4v4h-4z" fill={K} stroke="none" /></Ico></IconButton>
            <IconButton aria-label="円"><Ico><circle cx="10" cy="10" r="8.500" /><path d="M10 10l6-5" /><path d="M8 8h4v4H8zM15 2h4v4h-4z" fill={K} stroke="none" /></Ico></IconButton>
            <IconButton aria-label="円弧"><Ico><path d="M2 18C3 10 8 3 18 3" /><path d="M1 16h4v4H1zM8 6h4v4H8z" fill={K} stroke="none" /></Ico></IconButton>
            <IconButton aria-label="中心円弧"><Ico><path d="M2 17C3 9 8 3 18 3" /><path d="M0 15h4v4H0zM16 1h4v4h-4zM16 15h3v3h-3z" fill={K} stroke="none" /></Ico></IconButton>
            <IconButton aria-label="接線円弧"><Ico><path d="M2 13C2 5 8 2 17 5" stroke={B} strokeWidth="2" /><path d="M2 14v6" /><path d="M0 11h4v4H0zM16 3h4v4h-4z" fill={B} stroke="none" /></Ico></IconButton>
            <IconButton aria-label="フィレット"><Ico><path d="M2 13c0-6 3-9 10-10" stroke={B} strokeWidth="2" /><path d="M2 15v5M14 3h6" /><path d="M0 11h4v4H0zM10 1h4v4h-4z" fill={B} stroke="none" /></Ico></IconButton>
            <IconButton aria-label="スプライン"><Ico><path d="M2 11L6 3c4 0 5 13 9 13l4-8" /><path d="M0 9h4v4H0zM4 1h4v4H4zM13 14h4v4h-4zM16 7h4v4h-4z" fill={K} stroke="none" /></Ico></IconButton>
            <IconButton aria-label="楕円"><Ico><ellipse cx="10" cy="11" rx="8.500" ry="5.500" /><path d="M8 9h4v4H8zM8 3h4v4H8zM16 9h4v4h-4z" fill={K} stroke="none" /></Ico></IconButton>
            <IconButton aria-label="部分楕円"><Ico><path d="M7 4c14 0 14 13 0 13" /><path d="M5 2h4v4H5zM5 15h4v4H5z" fill={K} stroke="none" /></Ico></IconButton>
            <IconButton aria-label="線を選択"><Ico><path d="M2 18L18 2" stroke="#4ea82f" strokeWidth="2" /><path d="M0 16h5v4H0zM15 0h5v5h-5z" fill="#4ea82f" stroke="none" /><Arrow x={9} y={6} k={0.8} /></Ico></IconButton>
          </IconGrid>
          <GalleryScroll>
            <button aria-label="上"><svg width="10" height="6" viewBox="0 0 10 6"><path d="M5 1l4 4H1z" fill="#444" /></svg></button>
            <button aria-label="下"><svg width="10" height="6" viewBox="0 0 10 6"><path d="M5 5l4-4H1z" fill="#444" /></svg></button>
            <button aria-label="すべて"><svg width="10" height="10" viewBox="0 0 10 10"><path d="M1 1h8" stroke="#222" strokeWidth="2" /><path d="M5 9l4-4H1z" fill="#222" /></svg></button>
          </GalleryScroll>
        </Gallery>
      </PanelBody>
      <PanelTitle $tint>描画</PanelTitle>
    </Panel>
    <Panel $w={152}>
      <PanelBody $pad="3px 0">
        <BigButton><Big><path d="M3 17l22-4v20L3 37z" fill="#eee" /><path d="M7 8l29-5v29L7 37z" fill="#a9d4f2" stroke={B} /><path d="M17 6v29M26 5v29M7 18l29-5M7 27l29-5" stroke={B} /></Big>セット</BigButton>
        <BigButton><Big><path d="M4 8l27-6v28L4 36z" fill="#f2f2f2" /><path d="M13 6v28M22 4v28M4 17l27-6M4 26l27-6" /><circle cx="31" cy="24" r="7" fill="#fbd04a" stroke="#c7971c" /><path d="M31 31v7" strokeWidth="5" /></Big>表示</BigButton>
        <BigButton><Big><path d="M2 2h36v36H2z" fill="#f4f4f4" /><path d="M2 4h36" strokeWidth="4" /><path d="M11 16l4-4h14v15l-4 4H11z" fill="#4f9e3f" stroke="#2e6f23" /><path d="M11 16h14v15H11z" fill="#8cc47c" stroke="#2e6f23" /><path d="M25 16l4-4" stroke="#2e6f23" /><Arrow x={29} y={4} k={1.1} /></Big>ビューア</BigButton>
      </PanelBody>
      <PanelTitle $tint>作業面</PanelTitle>
    </Panel>
  </Ribbon>
);

export default function App() {
  return (
    <>
      <GlobalStyle />
      <Frame>
        <TopArea />
        <TabRow>
          <FileTab>ファイル</FileTab>
          {["作成", "挿入", "注釈", "表示", "管理"].map((t) => <RibbonTab key={t}>{t}</RibbonTab>)}
          <RibbonTab $tight>アドイン</RibbonTab>
          <RibbonTab $tight $active>修正 | 作成 押し出し</RibbonTab>
          <RibbonToggle aria-label="リボンの表示">
            <svg width="21" height="13" viewBox="0 0 21 13"><rect x="1" y="1" width="19" height="11" rx="3" fill="#eee" stroke="#444" strokeWidth="1.500" /><path d="M7 8l4-4 4 4z" fill="#222" /></svg>
            <Down />
          </RibbonToggle>
        </TabRow>
        <RibbonArea />
        <OptionsBar>
          <OptLabel $w={51} htmlFor="depth">奥行き</OptLabel>
          <OptInput id="depth" defaultValue="25.0" />
          <Check id="chain" type="checkbox" defaultChecked $gap={26} />
          <OptLabel $w={30} htmlFor="chain">連結</OptLabel>
          <OptLabel $w={87} $end htmlFor="offset">オフセット:</OptLabel>
          <OptInput id="offset" defaultValue="0.0" />
          <Check id="radius-on" type="checkbox" $gap={8} />
          <OptLabel $w={47} htmlFor="radius-on">半径:</OptLabel>
          <OptInput id="radius" aria-label="半径" $flat defaultValue="1000.0" />
        </OptionsBar>
        <Work>
          <SidePane>
            <PaneHeader>プロジェクト ブラウザ - ファミリ1<button aria-label="閉じる"><Cross /></button></PaneHeader>
            <Tree>
              <TreeRows>
                {nodes.map((n) => (
                  <Node key={n.t} $child={n.child} $sel={n.sel}>
                    <Toggle $none={!n.sign} $wide={!!n.child} aria-label={n.t}>
                      {n.sign && <svg width="8" height="8" viewBox="0 0 8 8" stroke="#2c3f86" strokeWidth="1.600"><path d={n.sign === "+" ? "M1 4h6M4 1v6" : "M1 4h6"} /></svg>}
                    </Toggle>
                    {n.icon}
                    <span>{n.t}</span>
                  </Node>
                ))}
              </TreeRows>
            </Tree>
          </SidePane>
          <Docs>
            <ViewTabs>
              <ViewTab><PlanIcon />配置図ビュー</ViewTab>
              <ViewTab><HouseIcon />ビュー 1</ViewTab>
              <ViewTab><PlanIcon />参照レベル</ViewTab>
              <ViewTab $active><PlanIcon />基準レベル<Spacer /><Cross s={13} /></ViewTab>
              <ViewTab><HouseIcon />{"{3D}"}</ViewTab>
              <Spacer />
              <BarDown />
            </ViewTabs>
            <CanvasRow>
              <Canvas>
                <Drawing />
                <NavBar>
                  <svg width="32" height="120" viewBox="0 0 32 120" fill="none" stroke="#a5acb5" strokeWidth="2">
                    <circle cx="26" cy="4.500" r="3.500" fill="#ddd" /><circle cx="26" cy="114" r="3.500" fill="#ddd" />
                    <path d="M13 18h10v10c0 13-19 13-19 0 0-6 4-10 9-10z" /><circle cx="13" cy="28" r="5" />
                    <text x="16" y="42" fontFamily="Noto Sans, sans-serif" fontSize="10" fontWeight="700" fill="#7ba7d6" stroke="none">2D</text>
                    <path d="M13 51h6l-3 4zM13 99h6l-3 4z" fill="#999" stroke="none" />
                    <path d="M2 60h28" stroke="#d0d0d0" strokeWidth="1" />
                    <path d="M7 69h12v13H7z" fill="#a9cf9b" stroke="#9abf8c" /><circle cx="19" cy="81" r="4" fill="#f6f6f6" /><path d="M22 84l4 4" />
                  </svg>
                </NavBar>
              </Canvas>
              <VScroll>
                <Chevron d="up" />
                <Spacer />
                <Thumb />
                <Spacer />
                <Chevron d="down" />
              </VScroll>
            </CanvasRow>
            <ViewBar>
              <ScaleText>1 : 20</ScaleText>
              <ViewIcons>
                <Ico><path d="M0 3h20v14H0z" fill="#e6e8ee" /></Ico>
                <Ico><path d="M1 8h13v10H1zM6 2h13v10l-5 6M1 8l5-6M14 8l5-6M6 2v10h13" /></Ico>
                <Ico><path d="M0 14h5M4 16V6h12M9 18v-7h6M13 3h5" stroke={B} strokeWidth="3" /><path d="M0 15h4M13 3h4M16 3v8" strokeWidth="2" /><RedX x={11} y={10} w={8} /></Ico>
                <Ico><path d="M0 14h5M4 16V6h8M9 18v-7h3" stroke={B} strokeWidth="3" /><path d="M0 15h4M12 2h4" strokeWidth="2" /><circle cx="16" cy="8" r="4" fill="#eaf4fc" stroke={B} /><path d="M16 12v5" /></Ico>
                <Ico><path d="M1 5c3-1 2 4 3 6M12 2c5-2 8 2 6 6" /><circle cx="7" cy="13" r="3.500" fill={L} /><circle cx="15" cy="10" r="3.500" fill={L} /></Ico>
                <Ico><path d="M1 1v18M19 1v8M1 4h18" /><path d="M1 15h10" strokeDasharray="2 1" /><path d="M11 11h8v7h-8z" fill="#555" /><path d="M13 11V8h4v3" /></Ico>
                <Ico><path d="M0 3h19v14H0zM3 7h9M3 10h9" fill="#e8eaf0" /><path d="M0 14h13" strokeWidth="3" /><circle cx="16" cy="8" r="4" fill="#eaf4fc" stroke={B} /><path d="M16 12v5" /></Ico>
              </ViewIcons>
              <Chevron d="left" />
              <Spacer />
              <Thumb $h />
              <Spacer />
              <ScrollEnd>
                <Chevron d="right" />
                <Ico s={12} v={12}><path d="M9 1h2M9 5h2M9 9h2M5 5h2M5 9h2M1 9h2" stroke="#aaa" strokeWidth="2" /></Ico>
              </ScrollEnd>
            </ViewBar>
          </Docs>
          <SidePane>
            <PaneHeader>プロパティ<button aria-label="閉じる"><Cross /></button></PaneHeader>
            <TypeBox>
              <svg width="84" height="84" viewBox="0 0 84 84">
                <rect x="1" y="1" width="82" height="82" fill="#ececec" stroke="#dcdcdc" />
                <path d="M5 5h60v44H5z" fill="#dedede" />
                <text x="17" y="63" fontFamily="Noto Sans, sans-serif" fontWeight="900" fontSize="74" fill="#707070">R</text>
                <text x="20" y="62" fontFamily="Noto Sans, sans-serif" fontWeight="800" fontSize="72" fill="#929292">R</text>
              </svg>
              <svg width="10" height="6" viewBox="0 0 10 6"><path d="M0 0h10L5 5z" fill="#888" /></svg>
            </TypeBox>
            <TypeRow>
              <InstanceSelect>
                <select aria-label="インスタンス"><option>押し出し</option></select>
                <svg width="10" height="10" viewBox="0 0 10 10" fill="none" stroke="#777" strokeWidth="1.500"><path d="M1 3l4 4 4-4" /></svg>
              </InstanceSelect>
              <EditType><Ico s={10} v={20}><g stroke="#aaa" strokeWidth="2.500"><path d="M1 2h8v7H1zM12 2h7v7h-7zM1 12h8v7H1zM12 12h7v7h-7z" /></g></Ico>タイプ編集</EditType>
            </TypeRow>
            <PropArea>
              <PropTable>
                <colgroup><col /><col width="149" /><col width="16" /></colgroup>
                <tbody>
                  {rows.map((r, i) =>
                    r.head ? (
                      <tr key={i}><th colSpan={3}><SectionHead>{r.head}<svg width="4" height="8" viewBox="0 0 4 8" fill="none" stroke="#666"><path d="M0 3l2-2 2 2M0 6l2-2 2 2" /></svg></SectionHead></th></tr>
                    ) : (
                      <tr key={i}>
                        <th scope="row">{r.id ? <label htmlFor={r.id}>{r.name}</label> : <DimText $dim={r.dim} $long={r.long}>{r.name}</DimText>}</th>
                        <td>{typeof r.value === "string" ? <DimText $dim={r.dim}>{r.value}</DimText> : r.value}</td>
                        <td>{r.btn && <MiniCell aria-label={`${r.name} の関連付け`} />}</td>
                      </tr>
                    )
                  )}
                </tbody>
              </PropTable>
            </PropArea>
            <PropFooter><a href="#help">プロパティ ヘルプ</a><Apply>適用</Apply></PropFooter>
          </SidePane>
        </Work>
        <Status>
          [参照面 : 参照面 : 左] の近接点
          <StatusIcons>
            <Ico s={22}><g fill="#f5b92e" stroke="#a87408"><rect x="1" y="2" width="8" height="6" rx="3" /><rect x="11" y="2" width="8" height="6" rx="3" /></g><Arrow x={9} y={5} k={0.8} /></Ico>
            <Ico s={22}><path d="M0 17L9 3v14zM3 13h12" fill={L} stroke={B} /><RedX x={12} y={1} w={7} /><Arrow x={12} y={7} k={0.7} /></Ico>
            <Ico s={22}><path d="M1 2h12v3H1zM3 5h8v5H3zM1 10h12v3H1z" fill="#f39a4a" stroke="#c8561b" /><path d="M7 13v6" /><Arrow x={12} y={7} k={0.7} /></Ico>
            <Ico s={22}><path d="M1 4l9-3v13l-9 4z" fill="#7fc0ee" stroke={B} /><RedX x={12} y={1} w={7} /><Arrow x={12} y={7} k={0.7} /></Ico>
            <Ico s={22}><path d="M6 1v11M0 6h12M4 3l2-2 2 2M2 4L0 6l2 2M4 10l2 2 2-2" /><Arrow x={11} y={6} k={0.8} /></Ico>
            <Ico s={22}><circle cx="10" cy="10" r="6.500" stroke="#8d8d8d" strokeWidth="4" strokeDasharray="3.600 1.500" /></Ico>
            <FilterButton aria-label="フィルタ"><Ico s={22}><path d="M1 2h18l-7 9v6l-4 2v-8z" fill="#a9b6c6" /></Ico>:0</FilterButton>
          </StatusIcons>
        </Status>

        <Banner>窓台を作成します</Banner>
        <Mark $x={139} $y={179} $w={98} $h={48} />
        <Mark $x={936} $y={59} $w={53} $h={50} />
        <Mark $x={880} $y={101} $w={74} $h={97} />
        <Ring $x={621} $y={226} />
        <Ring $x={345} $y={506} />
        <Ring $x={894} $y={506} />
        <Ring $x={345} $y={655} />
        <Ring $x={894} $y={655} />
        <StepNo $x={986} $y={15}>1</StepNo>
        <StepNo $x={213} $y={232}>2</StepNo>
        <StepNo $x={602} $y={330}>3</StepNo>
        <StepNo $x={818} $y={172}>4</StepNo>
        <Pointer $x={32} $y={108}>
          <svg width="32" height="36" viewBox="0 0 32 36"><circle cx="12" cy="13" r="11" fill="#f0e020" opacity="0.850" /><Arrow x={10} y={12} k={1.2} /></svg>
        </Pointer>
      </Frame>
    </>
  );
}
